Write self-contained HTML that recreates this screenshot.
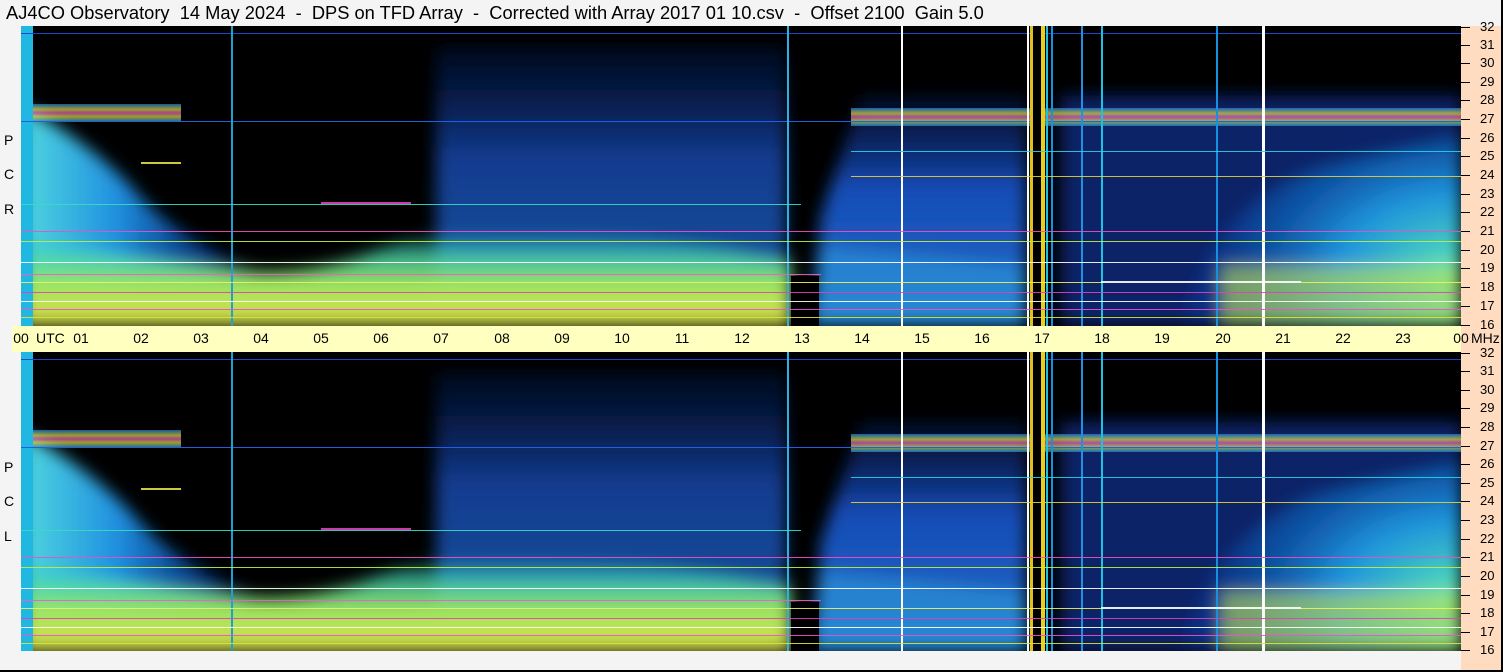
<!DOCTYPE html>
<html><head><meta charset="utf-8"><style>
body{margin:0;width:1503px;height:672px;background:#f4f4f4;position:relative;overflow:hidden;font-family:"Liberation Sans","DejaVu Sans",sans-serif;}
.t{position:absolute;left:6px;top:3px;font-size:18.3px;line-height:20px;color:#000;white-space:pre;}
.p{position:absolute;left:21px;}
.ax{position:absolute;left:1461px;top:26px;width:40px;height:644px;background:#ffdcc0;}
.band{position:absolute;left:12px;top:326px;width:1449px;height:26px;background:#ffffc0;}
.h{position:absolute;top:330px;font-size:14px;transform:translateX(-50%);}
.f{position:absolute;left:1480px;font-size:13px;height:16px;line-height:16px;margin-top:-8px;}
.tk{position:absolute;left:1461px;width:9px;height:1px;background:#000;}
.lab{position:absolute;left:4px;font-size:14px;}
</style></head><body>
<div class="t">AJ4CO Observatory  14 May 2024  -  DPS on TFD Array  -  Corrected with Array 2017 01 10.csv  -  Offset 2100  Gain 5.0</div>
<div class="ax"></div>
<div class="band"></div>
<div style="position:absolute;left:0;top:670px;width:1503px;height:2px;background:#000"></div>
<div style="position:absolute;left:1501px;top:0;width:2px;height:672px;background:#000"></div>

<svg class="p" style="top:26px" width="1440" height="300">
<defs>
<filter id="bl" x="-10%" y="-10%" width="120%" height="120%"><feGaussianBlur stdDeviation="8"/></filter>
<linearGradient id="gb" x1="0" y1="0" x2="0" y2="1"><stop offset="0" stop-color="#30c0d0" stop-opacity="0"/><stop offset=".25" stop-color="#40d8b0" stop-opacity=".8"/><stop offset=".6" stop-color="#a8e858"/><stop offset="1" stop-color="#d8d848"/></linearGradient>
<linearGradient id="gl" x1="0" y1="0" x2="1" y2="0"><stop offset="0" stop-color="#50d8e0"/><stop offset=".4" stop-color="#2090e0"/><stop offset=".8" stop-color="#0850c0" stop-opacity=".6"/><stop offset="1" stop-color="#0030a0" stop-opacity="0"/></linearGradient>
<radialGradient id="gr" cx="1" cy="0.75" r="1"><stop offset="0" stop-color="#60f0b0"/><stop offset=".45" stop-color="#20a0e8" stop-opacity=".9"/><stop offset="1" stop-color="#0838a0" stop-opacity=".3"/></radialGradient>
<linearGradient id="gm" x1="0" y1="0" x2="0" y2="1"><stop offset="0" stop-color="#0a2a80" stop-opacity=".3"/><stop offset=".4" stop-color="#1850c0"/><stop offset="1" stop-color="#2070d0"/></linearGradient>
<linearGradient id="hb" x1="0" y1="0" x2="0" y2="1"><stop offset="0" stop-color="#2080e0"/><stop offset=".3" stop-color="#e0e040"/><stop offset=".5" stop-color="#f060c0"/><stop offset=".7" stop-color="#e0e040"/><stop offset="1" stop-color="#1890e0"/></linearGradient>
</defs>
<g id="pan">
<rect width="1440" height="300" fill="#000"/>
<g filter="url(#bl)">
<rect x="415" y="20" width="350" height="280" fill="url(#gm)" opacity=".75"/>
<path d="M0 80 Q60 110 110 160 Q160 220 240 240 L240 260 L0 260Z" fill="url(#gl)"/>
<path d="M0 215 Q150 235 230 245 Q300 250 380 215 Q520 190 770 235 L770 300 L0 300Z" fill="url(#gb)"/>
<path d="M840 70 L1005 70 L1005 300 L790 300 L800 190Z" fill="url(#gm)" opacity=".95"/>
<path d="M790 300 L800 220 Q900 230 1005 240 L1005 300Z" fill="#30a8e0" opacity=".5"/>
<rect x="1040" y="70" width="400" height="230" fill="#0a34a0" opacity=".65"/>
<path d="M1160 300 Q1190 180 1300 140 L1440 110 L1440 300Z" fill="url(#gr)"/>
<rect x="1200" y="240" width="240" height="60" fill="#c0e050" opacity=".6"/>
</g>
<rect x="0" y="78" width="160" height="18" fill="url(#hb)" opacity=".7"/>
<rect x="830" y="82" width="610" height="18" fill="url(#hb)" opacity=".7"/>
<rect x="0" y="0" width="12" height="300" fill="#20b8e0"/>
<rect x="0" y="7" width="1440" height="1" fill="#1848d0"/>
<rect x="0" y="95" width="1440" height="1" fill="#2060e0"/>
<rect x="210" y="0" width="2" height="300" fill="#20a0d0"/>
<rect x="766" y="0" width="2" height="300" fill="#30b0e0"/>
<rect x="770" y="250" width="28" height="50" fill="#000"/>
<rect x="880" y="0" width="2" height="300" fill="#fff"/>
<rect x="1006" y="0" width="2" height="300" fill="#fff"/>
<rect x="1009" y="0" width="3" height="300" fill="#e0c020"/>
<rect x="1012" y="0" width="8" height="300" fill="#000"/>
<rect x="1020" y="0" width="4" height="300" fill="#e8d020"/>
<rect x="1025" y="0" width="2" height="300" fill="#20c0e0"/>
<rect x="1030" y="0" width="2" height="300" fill="#1890e0"/>
<rect x="1060" y="0" width="2" height="300" fill="#2090e0"/>
<rect x="1080" y="0" width="2" height="300" fill="#20c0e0"/>
<rect x="1195" y="0" width="2" height="300" fill="#1890e0"/>
<rect x="1241" y="0" width="3" height="300" fill="#fff"/>
<g opacity=".9">
<rect x="120" y="136" width="40" height="2" fill="#e0e040"/>
<rect x="0" y="178" width="780" height="1" fill="#30e0c0"/>
<rect x="300" y="176" width="90" height="2" fill="#e040c0"/>
<rect x="0" y="205" width="1440" height="1" fill="#f050c0"/>
<rect x="0" y="215" width="1440" height="1" fill="#c0f040"/>
<rect x="0" y="236" width="1440" height="1" fill="#fff"/>
<rect x="0" y="248" width="800" height="1" fill="#f060c0"/>
<rect x="0" y="256" width="1440" height="1" fill="#f0f060"/>
<rect x="0" y="266" width="1440" height="1" fill="#e040c0"/>
<rect x="0" y="275" width="1440" height="1" fill="#fff"/>
<rect x="0" y="283" width="1440" height="1" fill="#f050d0"/>
<rect x="0" y="291" width="1440" height="1" fill="#e0e040"/>
<rect x="830" y="125" width="610" height="1" fill="#30d0e0"/>
<rect x="830" y="150" width="610" height="1" fill="#e0d040"/>
<rect x="1080" y="255" width="200" height="2" fill="#fff"/>
</g>
</g>
</svg>
<svg class="p" style="top:352px" width="1440" height="299">
<use href="#pan"/>
</svg>

<div class="lab" style="top:132px">P</div><div class="lab" style="top:166px">C</div><div class="lab" style="top:201px">R</div>
<div class="lab" style="top:459px">P</div><div class="lab" style="top:493px">C</div><div class="lab" style="top:528px">L</div>

<div class="h" style="left:21px">00</div><div style="position:absolute;left:36px;top:330px;font-size:14px">UTC</div>
<div class="h" style="left:81px">01</div><div class="h" style="left:141px">02</div><div class="h" style="left:201px">03</div><div class="h" style="left:261px">04</div><div class="h" style="left:321px">05</div><div class="h" style="left:381px">06</div><div class="h" style="left:441px">07</div><div class="h" style="left:502px">08</div><div class="h" style="left:562px">09</div><div class="h" style="left:622px">10</div><div class="h" style="left:682px">11</div><div class="h" style="left:742px">12</div><div class="h" style="left:802px">13</div><div class="h" style="left:862px">14</div><div class="h" style="left:922px">15</div><div class="h" style="left:982px">16</div><div class="h" style="left:1042px">17</div><div class="h" style="left:1102px">18</div><div class="h" style="left:1162px">19</div><div class="h" style="left:1223px">20</div><div class="h" style="left:1283px">21</div><div class="h" style="left:1343px">22</div><div class="h" style="left:1403px">23</div><div class="h" style="left:1461px">00</div>
<div style="position:absolute;left:1471px;top:330px;font-size:14px">MHz</div>

<div class="f" style="top:27px">32</div><div class="f" style="top:45px">31</div><div class="f" style="top:63px">30</div><div class="f" style="top:82px">29</div><div class="f" style="top:100px">28</div><div class="f" style="top:119px">27</div><div class="f" style="top:138px">26</div><div class="f" style="top:156px">25</div><div class="f" style="top:175px">24</div><div class="f" style="top:194px">23</div><div class="f" style="top:212px">22</div><div class="f" style="top:231px">21</div><div class="f" style="top:250px">20</div><div class="f" style="top:268px">19</div><div class="f" style="top:287px">18</div><div class="f" style="top:306px">17</div><div class="f" style="top:325px">16</div>
<div class="f" style="top:353px">32</div><div class="f" style="top:371px">31</div><div class="f" style="top:390px">30</div><div class="f" style="top:408px">29</div><div class="f" style="top:427px">28</div><div class="f" style="top:446px">27</div><div class="f" style="top:464px">26</div><div class="f" style="top:483px">25</div><div class="f" style="top:501px">24</div><div class="f" style="top:520px">23</div><div class="f" style="top:539px">22</div><div class="f" style="top:557px">21</div><div class="f" style="top:576px">20</div><div class="f" style="top:595px">19</div><div class="f" style="top:613px">18</div><div class="f" style="top:632px">17</div><div class="f" style="top:650px">16</div>
<div class="tk" style="top:27px"></div><div class="tk" style="top:45px"></div><div class="tk" style="top:63px"></div><div class="tk" style="top:82px"></div><div class="tk" style="top:100px"></div><div class="tk" style="top:119px"></div><div class="tk" style="top:138px"></div><div class="tk" style="top:156px"></div><div class="tk" style="top:175px"></div><div class="tk" style="top:194px"></div><div class="tk" style="top:212px"></div><div class="tk" style="top:231px"></div><div class="tk" style="top:250px"></div><div class="tk" style="top:268px"></div><div class="tk" style="top:287px"></div><div class="tk" style="top:306px"></div><div class="tk" style="top:325px"></div>
<div class="tk" style="top:353px"></div><div class="tk" style="top:371px"></div><div class="tk" style="top:390px"></div><div class="tk" style="top:408px"></div><div class="tk" style="top:427px"></div><div class="tk" style="top:446px"></div><div class="tk" style="top:464px"></div><div class="tk" style="top:483px"></div><div class="tk" style="top:501px"></div><div class="tk" style="top:520px"></div><div class="tk" style="top:539px"></div><div class="tk" style="top:557px"></div><div class="tk" style="top:576px"></div><div class="tk" style="top:595px"></div><div class="tk" style="top:613px"></div><div class="tk" style="top:632px"></div><div class="tk" style="top:650px"></div>
</body></html>
